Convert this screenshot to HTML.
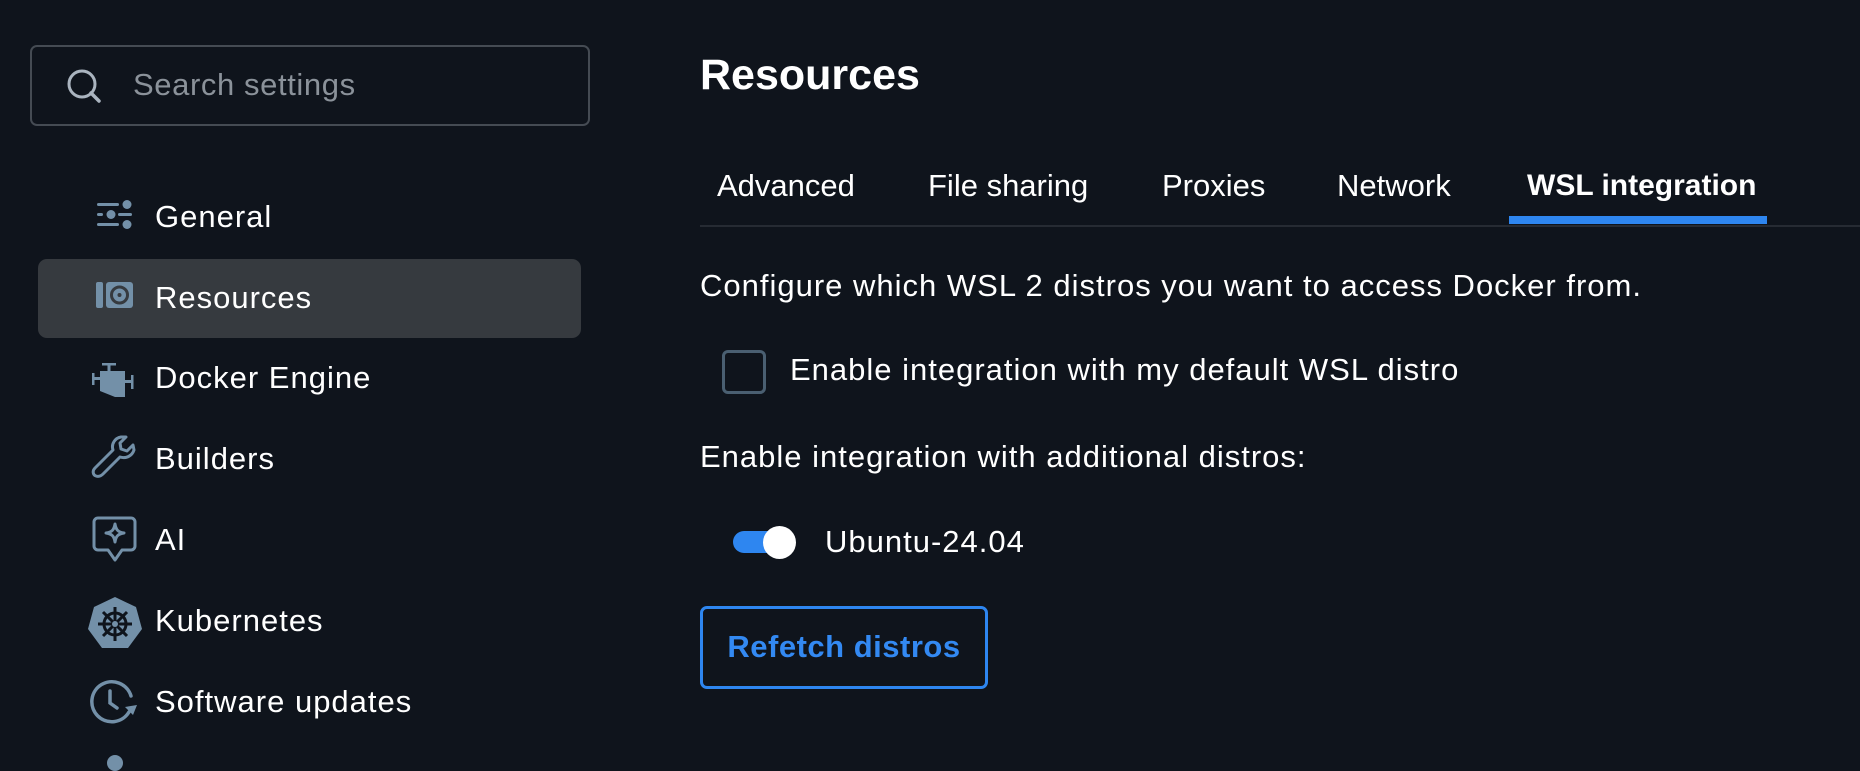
<!DOCTYPE html>
<html><head><meta charset="utf-8"><style>
*{margin:0;padding:0;box-sizing:border-box}
body{width:1860px;height:763px;background:#0f141c;overflow:hidden;position:relative;font-family:"Liberation Sans",sans-serif;color:#fff}
.a{position:absolute;white-space:nowrap}
.nav{position:absolute;left:155px;font-size:31px;line-height:34px;letter-spacing:1px;color:#fff}
.ic{position:absolute}
.tab{position:absolute;top:168px;font-size:31px;line-height:36px;color:#fff}
.t{font-size:31px;line-height:36px;letter-spacing:1px}
</style></head><body>
<div class="a" style="left:30px;top:45px;width:560px;height:81px;border:2px solid #454b53;border-radius:7px"></div>
<svg class="ic" style="left:64px;top:66px" width="40" height="40" viewBox="0 0 40 40"><circle cx="18" cy="18" r="13" fill="none" stroke="#aab4bf" stroke-width="3"/><path d="M27 27l8 8" stroke="#aab4bf" stroke-width="3.5" stroke-linecap="round"/></svg>
<div class="a" style="left:133px;top:67px;font-size:31px;line-height:36px;letter-spacing:0.6px;color:#8b929a">Search settings</div>

<div class="a" style="left:38px;top:259px;width:543px;height:79px;background:#363a3f;border-radius:9px"></div>

<svg class="ic" style="left:96px;top:200px" width="38" height="30" viewBox="0 0 38 30"><g fill="#7390a8"><rect x="1" y="3" width="22" height="3" rx="1.5"/><circle cx="31" cy="4.5" r="4.5"/><rect x="1" y="13" width="6" height="3" rx="1.5"/><circle cx="15" cy="14.5" r="4.5"/><rect x="22" y="13" width="14" height="3" rx="1.5"/><rect x="1" y="23" width="22" height="3" rx="1.5"/><circle cx="31" cy="24.5" r="4.5"/></g></svg>
<div class="nav" style="top:200px">General</div>

<svg class="ic" style="left:96px;top:282px" width="38" height="26" viewBox="0 0 38 26"><rect x="0" y="0" width="7" height="26" rx="2" fill="#7390a8"/><rect x="10" y="0" width="27" height="26" rx="3" fill="#7390a8"/><circle cx="23.5" cy="13" r="8" fill="none" stroke="#363a3f" stroke-width="3"/><circle cx="23.5" cy="13" r="2" fill="#363a3f"/></svg>
<div class="nav" style="top:281px">Resources</div>

<svg class="ic" style="left:92px;top:363px" width="42" height="36" viewBox="0 0 42 36"><g fill="#7390a8"><rect x="10" y="0" width="14" height="2.5"/><rect x="15.5" y="1" width="3" height="7"/><path d="M8 8h25v26h-10l-15-6z"/><rect x="1" y="14" width="7" height="3"/><rect x="0" y="10" width="2.5" height="12"/><rect x="33" y="17" width="7" height="3"/><rect x="39" y="12" width="2.5" height="14"/></g></svg>
<div class="nav" style="top:361px">Docker Engine</div>

<svg class="ic" style="left:91px;top:434px" width="50" height="46" viewBox="0 0 50 46"><path d="M30 3c-6 1-10 7-8 13L4 34c-3 3-2 7 1 8s5 0 7-2l17-17c6 2 12-1 14-7l-1-5-6 6-6-2-1-6 6-6z" fill="none" stroke="#7390a8" stroke-width="3" stroke-linejoin="round"/></svg>
<div class="nav" style="top:442px">Builders</div>

<svg class="ic" style="left:92px;top:516px" width="46" height="48" viewBox="0 0 46 48"><path d="M6 2h33a4 4 0 0 1 4 4v24a4 4 0 0 1-4 4h-9l-7 10-7-10h-10a4 4 0 0 1-4-4v-24a4 4 0 0 1 4-4z" fill="none" stroke="#7390a8" stroke-width="3" stroke-linejoin="round"/><path d="M23 8c1 6 3 8 9 9-6 1-8 3-9 9-1-6-3-8-9-9 6-1 8-3 9-9z" fill="none" stroke="#7390a8" stroke-width="3" stroke-linejoin="round"/></svg>
<div class="nav" style="top:523px">AI</div>

<svg class="ic" style="left:87px;top:596px" width="56" height="54" viewBox="0 0 56 54"><path d="M28 1l21 10 6 22-14 19h-26l-14-19 6-22z" fill="#7390a8"/><g stroke="#0f141c" stroke-width="3" fill="none"><circle cx="28" cy="28" r="11"/><path d="M28 11v34M11 28h34M16 16l24 24M40 16l-24 24"/></g><circle cx="28" cy="28" r="3" fill="#7390a8"/></svg>
<div class="nav" style="top:604px">Kubernetes</div>

<svg class="ic" style="left:89px;top:679px" width="52" height="48" viewBox="0 0 52 48"><path d="M40 33a20 20 0 1 1 2-16" fill="none" stroke="#7390a8" stroke-width="3.5" stroke-linecap="round"/><path d="M36 28l8 8 4-10z" fill="#7390a8"/><path d="M21 12v12l7 5" fill="none" stroke="#7390a8" stroke-width="3.5" stroke-linecap="round"/></svg>
<div class="nav" style="top:685px">Software updates</div>
<div class="a" style="left:107px;top:755px;width:16px;height:16px;border-radius:50%;background:#7390a8"></div>

<div class="a" style="left:700px;top:51px;font-size:43px;line-height:48px;font-weight:bold">Resources</div>

<div class="tab" style="left:717px">Advanced</div>
<div class="tab" style="left:928px">File sharing</div>
<div class="tab" style="left:1162px">Proxies</div>
<div class="tab" style="left:1337px">Network</div>
<div class="tab" style="left:1527px;font-weight:bold;font-size:30px">WSL integration</div>
<div class="a" style="left:700px;top:225px;width:1160px;height:2px;background:#262b33"></div>
<div class="a" style="left:1509px;top:216px;width:258px;height:8px;background:#2e86f0"></div>

<div class="a t" style="left:700px;top:268px">Configure which WSL 2 distros you want to access Docker from.</div>
<div class="a" style="left:722px;top:350px;width:44px;height:44px;border:3px solid #4a5f71;border-radius:6px"></div>
<div class="a t" style="left:790px;top:352px">Enable integration with my default WSL distro</div>
<div class="a t" style="left:700px;top:439px">Enable integration with additional distros:</div>
<div class="a" style="left:733px;top:531px;width:60px;height:22px;border-radius:11px;background:#2e86f0"></div>
<div class="a" style="left:763px;top:526px;width:33px;height:33px;border-radius:50%;background:#fff"></div>
<div class="a t" style="left:825px;top:524px">Ubuntu-24.04</div>
<div class="a" style="left:700px;top:606px;width:288px;height:83px;border:3px solid #2e86f0;border-radius:7px"></div>
<div class="a" style="left:700px;top:629px;width:288px;text-align:center;font-size:31px;line-height:36px;letter-spacing:0.5px;font-weight:bold;color:#3389f2">Refetch distros</div>
</body></html>
